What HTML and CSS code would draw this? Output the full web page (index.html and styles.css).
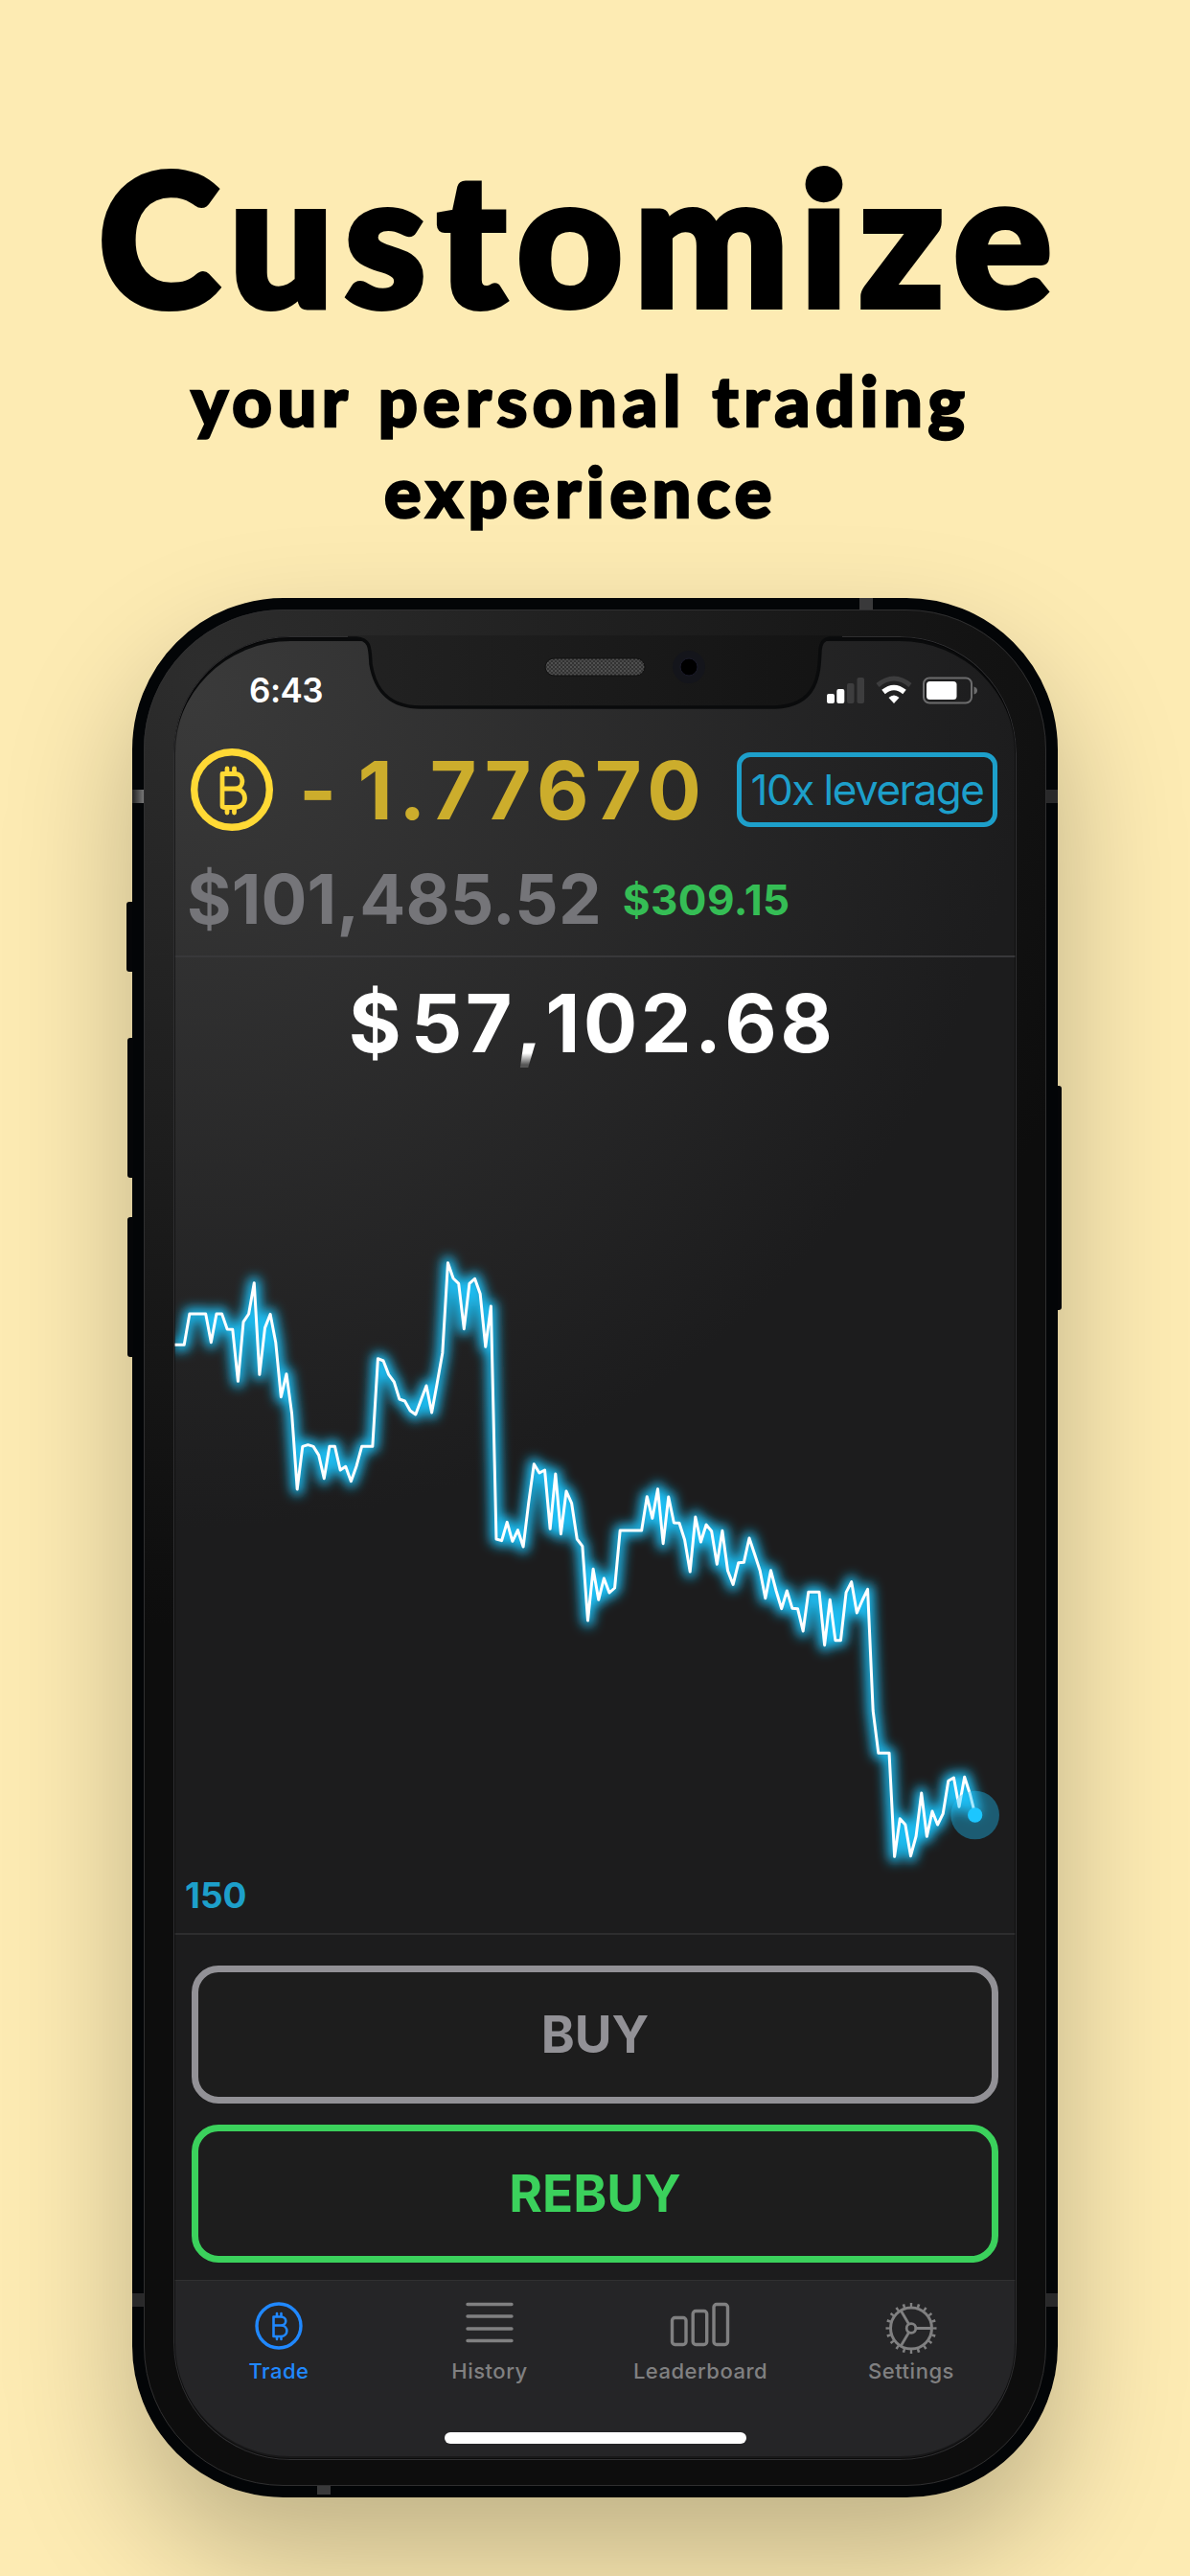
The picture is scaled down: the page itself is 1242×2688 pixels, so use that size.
FILE: index.html
```html
<!DOCTYPE html>
<html lang="en">
<head>
    <meta charset="UTF-8">
    <meta name="viewport" content="width=device-width, initial-scale=1.0">
    <title>Customize your personal trading experience</title>
    <link rel="stylesheet" href="styles.css">
</head>
<body>
    <header class="promo">
        <h1>Customize</h1>
        <p>your personal trading<br>experience</p>
    </header>

    <div class="phone">
        <i class="side-btn mute"></i>
        <i class="side-btn vol-up"></i>
        <i class="side-btn vol-down"></i>
        <i class="side-btn power"></i>
        <i class="antenna top"></i>
        <i class="antenna bottom"></i>
        <i class="antenna left-top"></i>
        <i class="antenna right-top"></i>
        <i class="antenna left-bottom"></i>
        <i class="antenna right-bottom"></i>

        <!-- notch with speaker and camera -->
        <svg class="notch" width="516" height="80" viewBox="0 0 516 80">
            <defs>
                <pattern id="mesh" width="4" height="4" patternUnits="userSpaceOnUse">
                    <rect width="4" height="4" fill="#333"/>
                    <circle cx="1" cy="1" r="1" fill="#5a5a5a"/>
                    <circle cx="3" cy="3" r="1" fill="#505050"/>
                </pattern>
                <linearGradient id="notchFill">
                    <stop offset="0" stop-color="#222"/>
                    <stop offset="1" stop-color="#131313"/>
                </linearGradient>
            </defs>
            <path d="M0 0H516V2H503Q494 3 493 15C492 40 491 72 446 74H76C32 74 26 42 24 30C23 14 24 3 9 2H0Z" fill="url(#notchFill)"/>
            <path d="M0 3H9C24 4 23 14 24 30C26 42 32 75 76 75H446C491 73 492 40 493 15Q494 4 503 3H516" fill="none" stroke="#0a0b0c" stroke-width="3.500"/>
            <rect x="206" y="24" width="104" height="18" rx="9" fill="url(#mesh)" stroke="#111"/>
            <circle cx="356" cy="33" r="17" fill="#14151b"/>
            <circle cx="356" cy="33" r="9" fill="#000" stroke="#1a1a2a"/>
        </svg>

        <main class="screen">
            <div class="status-bar">
                <span class="time">6:43</span>
                <svg width="160" height="30" viewBox="0 0 160 30">
                    <rect x="1" y="19" width="8" height="10" rx="2" fill="#fff"/>
                    <rect x="11.300" y="14" width="8" height="15" rx="2" fill="#fff"/>
                    <rect x="22" y="8" width="7.500" height="21" rx="2" fill="#3d3d3e"/>
                    <rect x="32.500" y="2" width="7.500" height="27" rx="2" fill="#3d3d3e"/>
                    <path d="M54 10Q71 -4 88 10" fill="none" stroke="#3d3d3e" stroke-width="5"/>
                    <path d="M60 17Q71 8 82 17" fill="none" stroke="#fff" stroke-width="5.500"/>
                    <path d="M65.500 23Q71 18 76.500 23L71 29Z" fill="#fff"/>
                    <rect x="102" y="2.500" width="50" height="26" rx="6" fill="none" stroke="#6c6c6d" stroke-width="2"/>
                    <rect x="105" y="6" width="31.500" height="19" rx="3.500" fill="#fff"/>
                    <path d="M154.500 11.500Q158 12.500 158 15.500T154.500 19.500Z" fill="#6c6c6d"/>
                </svg>
            </div>

            <div class="balance">
                <svg class="coin" width="86" height="86" viewBox="0 0 86 86">
                    <circle cx="43" cy="43" r="39.300" stroke-width="7.400"/>
                    <path d="M33 26.500H46C56.500 26.500 56.500 42 46 42H33M46 42C60 42 60 61.500 46 61.500H35Q33 61.500 33 59.500V26.500M38 21V26M45.500 21V26M38 62V67M45.500 62V67" stroke-width="4.800"/>
                </svg>
                <span class="amount">- 1.77670</span>
                <span class="leverage">10x leverage</span>
            </div>

            <div class="money">
                <span class="total">$101,485.52</span>
                <span class="profit">$309.15</span>
            </div>

            <section class="chart">
                <svg class="plot" viewBox="0 0 2640 3054" preserveAspectRatio="none">
                    <defs>
                        <filter id="glow" x="-5%" y="-5%" width="110%" height="110%">
                            <feGaussianBlur stdDeviation="18"/>
                        </filter>
                    </defs>
                    <polyline id="lineGlow" class="glow" filter="url(#glow)"/>
                    <polyline id="line" class="line"/>
                    <circle class="halo" cx="2510" cy="2685" r="76"/>
                    <circle class="dot" cx="2510" cy="2685" r="23"/>
                </svg>
                <div class="price"><span class="currency">$</span><span class="digits">57,102.68</span></div>
                <div class="ticks">150</div>
            </section>

            <div class="actions">
                <button class="btn buy">BUY</button>
                <button class="btn rebuy">REBUY</button>
            </div>

            <nav class="tabs">
                <a class="tab active">
                    <svg width="56" height="60" viewBox="0 0 56 60">
                        <circle cx="28" cy="28" r="23" stroke-width="3.400"/>
                        <path d="M22.500 18.500H30C37 18.500 37 27.500 30 27.500H22.500M30 27.500C38.500 27.500 38.500 39 30 39H22.500V18.500M26 15V18M30.500 15V18M26 39V42M30.500 39V42" stroke-width="2.600"/>
                    </svg>
                    <span>Trade</span>
                </a>
                <a class="tab">
                    <svg width="56" height="60" viewBox="0 0 56 60">
                        <path d="M5 5.500H51M5 18H51M5 31H51M5 43.500H51" stroke-width="3.400"/>
                    </svg>
                    <span>History</span>
                </a>
                <a class="tab">
                    <svg width="64" height="60" viewBox="0 0 64 60">
                        <rect x="2.500" y="19.500" width="14.500" height="28" rx="3" stroke-width="3.400"/>
                        <rect x="24.200" y="12.500" width="14.500" height="35" rx="3" stroke-width="3.400"/>
                        <rect x="46" y="5.500" width="14.500" height="42" rx="3" stroke-width="3.400"/>
                    </svg>
                    <span>Leaderboard</span>
                </a>
                <a class="tab">
                    <svg width="60" height="60" viewBox="0 0 60 60">
                        <circle cx="30" cy="30.500" r="21.500" stroke-width="3"/>
                        <circle cx="30" cy="30.500" r="4.800" stroke-width="2.800"/>
                        <circle cx="30" cy="30.500" r="24.500" stroke-width="4" stroke-linecap="butt" pathLength="200" stroke-dasharray="3.200 6.800" stroke-dashoffset="1.600"/>
                        <path d="M35 30.500H51M27.500 26L19.500 12.500M27.500 35L19.500 48.500" stroke-width="2.800"/>
                    </svg>
                    <span>Settings</span>
                </a>
                <i class="home-indicator"></i>
            </nav>
        </main>
    </div>

    <script>
        // one y value for each price tick
        const ticks = [
            370, 370, 370, 273, 273, 273, 273, 362, 273, 273, 321, 322, 484, 298, 273,
            176, 463, 317, 274, 362, 533, 461, 585, 822, 688, 683, 688, 715, 788, 688,
            688, 762, 751, 797, 750, 688, 688, 688, 413, 420, 463, 486, 540, 546, 576,
            588, 543, 498, 582, 490, 395, 113, 162, 178, 320, 178, 163, 210, 376, 249,
            978, 983, 925, 985, 950, 1002, 865, 743, 771, 762, 946, 774, 962, 828, 866,
            978, 1000, 1233, 1072, 1168, 1101, 1146, 1131, 951, 951, 951, 951, 951, 845, 913,
            821, 992, 846, 927, 928, 980, 1080, 909, 987, 933, 953, 1057, 952, 1077, 1120,
            1052, 1051, 975, 1025, 1077, 1163, 1076, 1140, 1196, 1140, 1195, 1196, 1266, 1144, 1144,
            1144, 1310, 1168, 1295, 1295, 1145, 1112, 1209, 1170, 1135, 1515, 1648, 1648, 1648, 1972,
            1853, 1872, 1970, 1908, 1773, 1909, 1830, 1872, 1838, 1735, 1725, 1816, 1723, 1775, 1842
        ];
        const step = 16.85;
        const offsetY = 843;

        const points = ticks.map((y, i) => `${(i * step).toFixed(1)},${y + offsetY}`).join(' ');
        document.getElementById('line').setAttribute('points', points);
        document.getElementById('lineGlow').setAttribute('points', points);
    </script>
</body>
</html>
```
FILE: styles.css
```css
* {
    margin: 0;
    padding: 0;
    box-sizing: border-box;
}

body {
    width: 1242px;
    height: 2688px;
    padding: 136px 0 82px;
    display: flex;
    flex-direction: column;
    justify-content: space-between;
    align-items: center;
    overflow: hidden;
    background: #fdebb3;
    font-family: 'Inter', 'Liberation Sans', sans-serif;
}

.promo {
    width: 1212px;
    align-self: flex-start;
    text-align: center;
    font-family: 'Lato', 'Open Sans', sans-serif;
    font-weight: 900;
    color: #000;
    white-space: nowrap;
}

h1 {
    font-size: 192px;
    line-height: 220px;
    font-weight: 900;
    letter-spacing: 11.5px;
    -webkit-text-stroke: 6px #000;
}

.promo p {
    margin-top: 14px;
    font-size: 72px;
    line-height: 95px;
    letter-spacing: 5.6px;
    word-spacing: 5px;
    -webkit-text-stroke: 2.5px #000;
}

/* phone body */
.phone {
    position: relative;
    width: 966px;
    height: 1982px;
    flex: none;
    padding: 28px 31px 27px;
    border: 12px solid #030507;
    border-radius: 158px;
    background: radial-gradient(circle 1000px at 60px 60px, #2d2d2d, #0d0d0d);
    box-shadow: 0 60px 130px rgba(0, 0, 0, 0.25);
}

.phone::before {
    content: '';
    position: absolute;
    inset: 0;
    border: 1px solid #2f2f30;
    border-radius: 146px;
}

.side-btn {
    position: absolute;
    width: 6px;
    background: #050608;
    border-radius: 3px 0 0 3px;
}

.mute { left: -18px; top: 305px; height: 73px; }
.vol-up { left: -17px; top: 447px; height: 146px; }
.vol-down { left: -17px; top: 634px; height: 146px; }
.power { right: -16px; top: 497px; width: 4px; height: 234px; border-radius: 0 3px 3px 0; }

.antenna {
    position: absolute;
    width: 12px;
    height: 14px;
    background: #39393a;
}

.antenna.top { top: -12px; left: 747px; width: 14px; height: 12px; }
.antenna.bottom { bottom: -9px; left: 181px; width: 14px; height: 9px; }
.antenna.left-top { left: -12px; top: 188px; background: linear-gradient(90deg, #222, #777); }
.antenna.right-top { right: -12px; top: 188px; background: #29292a; }
.antenna.left-bottom { left: -12px; top: 1757px; background: #29292a; }
.antenna.right-bottom { right: -12px; top: 1757px; background: #29292a; }

.notch {
    position: absolute;
    left: 213px;
    top: 27px;
    z-index: 2;
}

/* app screen */
.screen {
    height: 100%;
    display: flex;
    flex-direction: column;
    overflow: hidden;
    border-radius: 122px;
    background: radial-gradient(circle 870px at 20px 60px, #3a3a3a, #1c1c1d);
    position: relative;
}

.screen::after {
    content: '';
    position: absolute;
    inset: 0;
    border-radius: 122px;
    box-shadow: inset 0 0 0 1px #303032, inset 0 0 0 2px rgba(0, 0, 0, 0.5), inset 0 5px 0 0 #0a0b0c, inset 0 -4px 0 0 rgba(0, 0, 0, 0.35);
    pointer-events: none;
}

.status-bar {
    height: 112px;
    padding: 0 39px 0 79px;
    display: flex;
    justify-content: space-between;
    align-items: center;
    color: #fff;
}

.time {
    font-size: 35px;
    font-weight: 600;
    letter-spacing: -0.5px;
}

.balance {
    height: 96px;
    padding: 0 20px 0 18px;
    display: flex;
    align-items: center;
}

.coin {
    fill: none;
    stroke: #ffd935;
    stroke-linecap: round;
    stroke-linejoin: round;
}

.amount {
    margin-left: 27px;
    font-size: 84px;
    font-weight: 700;
    letter-spacing: 6.6px;
    word-spacing: -11px;
    white-space: nowrap;
    color: #ccad2c;
}

.leverage {
    margin-left: auto;
    width: 272px;
    height: 78px;
    border: 5px solid #1d9fca;
    border-radius: 14px;
    font-size: 44px;
    line-height: 68px;
    letter-spacing: -1.5px;
    text-align: center;
    white-space: nowrap;
    color: #1d9fca;
}

.money {
    height: 125px;
    padding: 23px 14px 0;
    display: flex;
    align-items: baseline;
    gap: 22px;
    font-weight: 700;
}

.total {
    font-size: 71px;
    letter-spacing: 0.2px;
    color: #757579;
}

.profit {
    font-size: 44px;
    letter-spacing: 0.4px;
    color: #35bd55;
    position: relative;
    top: -9px;
}

.chart {
    position: relative;
    height: 1022px;
    border-top: 2px solid #38383a;
    border-bottom: 2px solid #2d2d2e;
    display: flex;
    flex-direction: column;
    justify-content: space-between;
}

.plot {
    position: absolute;
    left: 0;
    top: 0;
    width: 880px;
    height: 1018px;
}

.plot polyline {
    fill: none;
    stroke-linejoin: round;
}

.line {
    stroke: #fff;
    stroke-width: 9;
}

.glow {
    stroke: #1cbdf2;
    stroke-width: 38;
}

.dot { fill: #1cc6ff; }
.halo { fill: #1cc6ff; fill-opacity: 0.38; }

.price {
    padding: 18px 6px 0 0;
    display: flex;
    justify-content: center;
    gap: 10px;
    font-size: 84px;
    line-height: 102px;
    font-weight: 700;
    color: #fff;
}

.digits {
    letter-spacing: 3.3px;
    font-kerning: none;
    background: linear-gradient(#fff 82px, #555 94px);
    -webkit-background-clip: text;
    background-clip: text;
    color: transparent;
}

.ticks {
    padding: 0 0 17px 12px;
    font-size: 37px;
    font-weight: 700;
    color: #1d9fca;
}

.actions {
    padding: 32px 19px 18px;
    display: flex;
    flex-direction: column;
    gap: 22px;
}

.btn {
    height: 144px;
    border: 7px solid;
    border-radius: 28px;
    background: #1d1d1d;
    font: 700 53px 'Inter', sans-serif;
}

.buy { color: #929196; }
.rebuy { color: #3bd15c; }

.tabs {
    position: relative;
    flex: 1;
    padding-top: 19px;
    display: grid;
    grid-template-columns: repeat(4, 1fr);
    align-items: start;
    background: #252527;
    border-top: 1px solid #303031;
}

.tab {
    display: flex;
    flex-direction: column;
    align-items: center;
    color: #808081;
    font-size: 22px;
    line-height: 30px;
    font-weight: 500;
    letter-spacing: 0.5px;
}

.tab.active { color: #2088ff; }

.tab svg {
    fill: none;
    stroke: currentColor;
    stroke-linecap: round;
    stroke-linejoin: round;
}

.home-indicator {
    position: absolute;
    left: 283px;
    bottom: 17px;
    width: 315px;
    height: 12px;
    border-radius: 6px;
    background: #fff;
}
```
